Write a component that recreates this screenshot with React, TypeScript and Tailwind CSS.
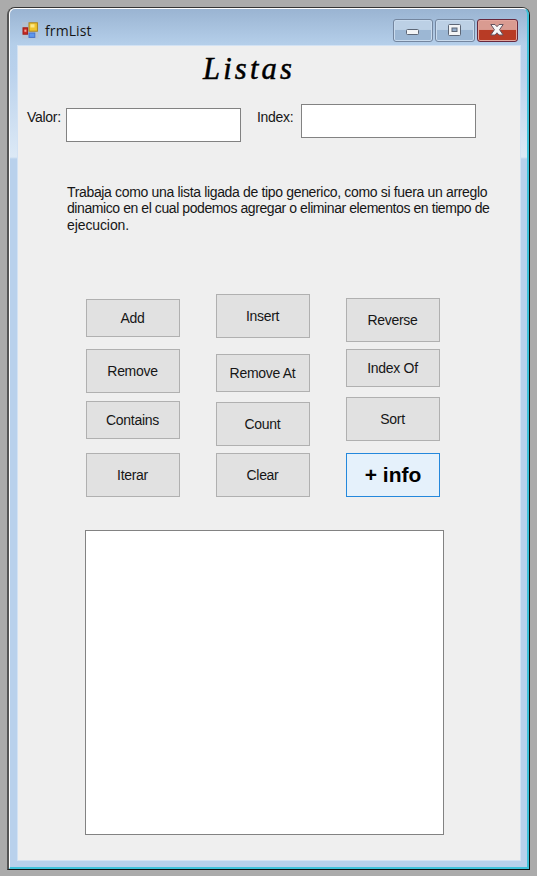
import type { ReactNode } from "react";

const columns = [
  [
    { label: "Add", box: "mt-[5px] h-[38px]" },
    { label: "Remove", box: "mt-3 h-11" },
    { label: "Contains", box: "mt-2 h-[38px]" },
    { label: "Iterar", box: "mt-[14px] h-11" },
  ],
  [
    { label: "Insert", box: "h-11" },
    { label: "Remove At", box: "mt-4 h-[38px]" },
    { label: "Count", box: "mt-[10px] h-11" },
    { label: "Clear", box: "mt-[7px] h-11" },
  ],
  [
    { label: "Reverse", box: "mt-1 h-11" },
    { label: "Index Of", box: "mt-[7px] h-[38px]" },
    { label: "Sort", box: "mt-[10px] h-11" },
    { label: "+ info", box: "mt-3 h-11", primary: true },
  ],
];

function FormIcon() {
  return (
    <svg width="18" height="18" viewBox="0 0 18 18" className="mt-[13px] shrink-0">
      <rect x="0" y="0" width="16.5" height="16.5" fill="#b9c1cb" opacity="0.6" />
      <rect x="7" y="0.8" width="8.4" height="8.4" fill="#f0c52f" stroke="#a8821d" />
      <rect x="8.5" y="2.3" width="4" height="3.2" fill="#fbe88a" />
      <rect x="1" y="5.8" width="4.6" height="6.4" fill="#c92a22" stroke="#9d1c1a" />
      <rect x="2.4" y="7.6" width="2" height="2.2" fill="#f0a49b" />
      <rect x="7" y="11" width="5.8" height="4.4" fill="#5d97ee" stroke="#4772c9" />
    </svg>
  );
}

function Caption({ danger, children }: { danger?: boolean; children: ReactNode }) {
  return (
    <button
      className={
        danger
          ? "h-[23px] w-[41px] rounded-[3px] border border-[#67283d] bg-linear-to-b from-[#d99b91] from-45% to-[#b83b25] to-50% shadow-[inset_0_0_0_1px_#e3a69d]"
          : "h-[23px] w-10 rounded-[3px] border border-[#74869f] bg-linear-to-b from-[#bcd0e5] from-45% to-[#9cb7d4] to-50% shadow-[inset_0_0_0_1px_#c9dbee]"
      }
    >
      <svg width="39" height="21" viewBox="0 0 39 21">
        {children}
      </svg>
    </button>
  );
}

export default function App() {
  return (
    <div className="h-[876px] w-[537px] overflow-hidden bg-[#ababab] pt-[7px] pl-[7px] font-['Liberation_Sans',Arial,sans-serif] text-[14px] text-[#161616]">
      <div className="h-[863px] w-[523px] rounded-t-[8px] border-t border-r border-b border-l-2 border-t-[#333] border-r-[#111] border-b-[#111] border-l-[#555]">
        <div className="h-full rounded-t-[6px] border-t border-r-2 border-b-2 border-l border-t-white border-r-[#3fc2da] border-b-[#3fc2da] border-l-white bg-[linear-gradient(to_bottom,#9ab4d2_0,#b5cfea_36px,#b9d1ec_60px,#dce9f6_148px,#b9d1ec_150px)]">
          <header className="flex h-9 pl-3">
            <FormIcon />
            <h1 className="mt-[12px] ml-[5px] w-[60px] font-['Open_Sans','Noto_Sans',sans-serif] text-[14px] leading-[20px] tracking-[0.1px]">frmList</h1>
            <div className="mt-[10px] ml-auto flex gap-[2px] pr-[9px]">
              <Caption>
                <rect x="12.5" y="9.5" width="12" height="5" rx="1" fill="#f2f4f6" stroke="#5c6676" />
              </Caption>
              <Caption>
                <rect x="12.5" y="4.5" width="12" height="11" rx="1" fill="#f2f4f6" stroke="#5c6676" />
                <rect x="16" y="8" width="5" height="3.5" fill="#91abc9" stroke="#5c6676" />
              </Caption>
              <Caption danger>
                <path d="M12.8 4.5h4.2l2 2.2 2-2.2h4.2l-3.6 5.2 3.6 5.3h-4.2l-2-2.2-2 2.2h-4.2l3.6-5.3z" fill="#f7f7f7" stroke="#64535e" strokeLinejoin="round" />
              </Caption>
            </div>
          </header>
          <main className="ml-[7px] h-[816px] w-[504px] border border-[#d3e2f3] bg-[#efefef]">
            <h2 className="mt-[5px] ml-[185px] h-[38px] w-[120px] font-['Liberation_Serif',serif] text-[30.5px] leading-[37px] tracking-[3.2px] text-black italic [-webkit-text-stroke:0.5px_black]">Listas</h2>
            <div className="flex h-[38px] pt-[15px] pl-[9px]">
              <label className="mt-[5px] w-[39px] leading-4 tracking-[-0.3px]">Valor:</label>
              <input className="mt-[4px] h-[34px] w-[175px] shrink-0 border border-[#828282] bg-white" />
              <label className="mt-[5px] ml-4 w-[44px] leading-4 tracking-[-0.3px]">Index:</label>
              <input className="h-[34px] w-[175px] shrink-0 border border-[#828282] bg-white" />
            </div>
            <p className="mt-[56px] ml-[49px] h-[111px] pt-px leading-[16.3px] whitespace-nowrap">
              <span className="tracking-[-0.34px]">Trabaja como una lista ligada de tipo generico, como si fuera un arreglo</span>
              <br />
              <span className="tracking-[-0.42px]">dinamico en el cual podemos agregar o eliminar elementos en tiempo de</span>
              <br />
              <span className="tracking-[-0.1px]">ejecucion.</span>
            </p>
            <div className="ml-[68px] flex h-[236px] gap-9">
              {columns.map((column) => (
                <div key={column[0].label} className="flex w-[94px] flex-col">
                  {column.map((item) => (
                    <button
                      key={item.label}
                      className={`shrink-0 border ${item.box} ${
                        item.primary
                          ? "border-[#2488dc] bg-[#e5f1fb] text-[21px] font-bold text-black"
                          : "border-[#b0b0b0] bg-[#e1e1e1] pr-px pl-0 tracking-[-0.3px]"
                      }`}
                    >
                      {item.label}
                    </button>
                  ))}
                </div>
              ))}
            </div>
            <div className="ml-[67px] h-[305px] w-[359px] border border-[#828282] bg-white" />
          </main>
        </div>
      </div>
    </div>
  );
}
